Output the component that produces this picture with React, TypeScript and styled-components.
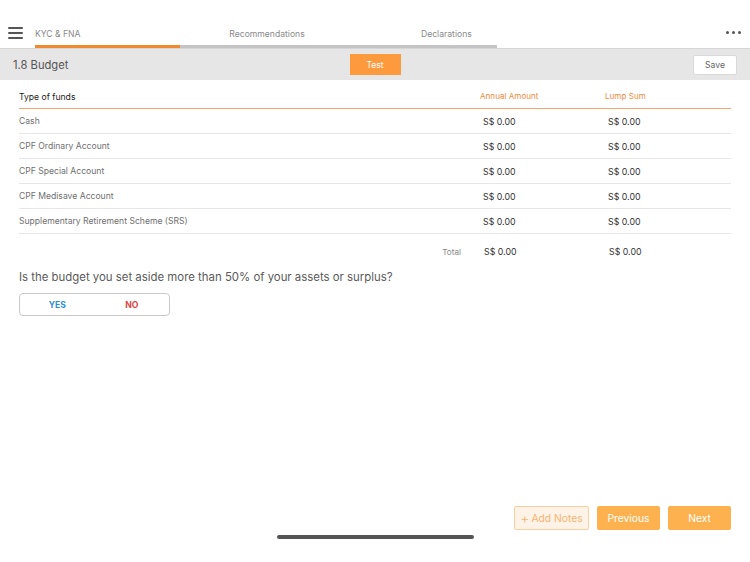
import React, { useState } from 'react'
import styled, { createGlobalStyle } from 'styled-components'

const GlobalStyle = createGlobalStyle`
	html, body {
		margin: 0;
		padding: 0;
		background: #ffffff;
	}
	body {
		font-family: Inter, 'Liberation Sans', Arial, sans-serif;
		-webkit-font-smoothing: antialiased;
	}
`

const Page = styled.div`
	width: 750px;
	height: 562px;
	display: flex;
	flex-direction: column;
	overflow: hidden;
	background: #fff;
`

const TopBar = styled.div`
	height: 48px;
	display: flex;
	align-items: flex-end;
	border-bottom: 1px solid #d6d6d6;
	padding-left: 8px;
	padding-right: 8px;
`

const Hamburger = styled.div`
	width: 15px;
	display: flex;
	flex-direction: column;
	gap: 3px;
	margin-bottom: 9px;
	margin-right: 12px;

	span {
		display: block;
		height: 2px;
		border-radius: 1px;
		background: #555;
	}
`

const Tabs = styled.div`
	display: flex;
	flex: 1;
`

const Tab = styled.div<{ $width: number; $active?: boolean; $indent?: number; $center?: boolean }>`
	width: ${p => p.$width}px;
	font-size: 8.6px;
	color: #8a8a8a;
	text-align: ${p => (p.$center ? 'center' : 'left')};
	padding-left: ${p => p.$indent || 0}px;
	box-sizing: border-box;
	height: 20px;
	border-bottom: 3px solid ${p => (p.$active ? '#f08a2c' : '#c4c4c4')};
	line-height: 12px;
`

const Dots = styled.div`
	margin-left: auto;
	display: flex;
	gap: 3px;
	margin-bottom: 14px;
	margin-right: 1px;

	span {
		width: 3px;
		height: 3px;
		border-radius: 50%;
		background: #555;
	}
`

const SubHeader = styled.div`
	height: 31px;
	background: #e6e6e6;
	display: grid;
	grid-template-columns: 1fr auto 1fr;
	align-items: center;
	padding: 0 13px;
`

const Title = styled.div`
	font-size: 11.2px;
	color: #555;
`

const TestButton = styled.div`
	width: 51px;
	height: 21px;
	background: #fd9a3e;
	color: #fff;
	font-size: 8.6px;
	display: flex;
	align-items: center;
	justify-content: center;
`

const SaveButton = styled.div`
	justify-self: end;
	width: 42px;
	height: 18px;
	background: #fff;
	border: 1px solid #d9d9d9;
	border-radius: 2px;
	color: #666;
	font-size: 8.6px;
	display: flex;
	align-items: center;
	justify-content: center;
`

const Content = styled.div`
	padding: 0 19px;
	flex: 1;
`

const Row = styled.div<{ $height: number; $line?: 'orange' | 'gray' | 'none' }>`
	display: grid;
	grid-template-columns: 1fr 125px 126px;
	align-items: center;
	height: ${p => p.$height}px;
	border-bottom: 1px solid
		${p => (p.$line === 'orange' ? '#f2a56c' : p.$line === 'none' ? 'transparent' : '#e6e6e6')};
	box-sizing: border-box;
`

const Label = styled.div<{ $dark?: boolean }>`
	font-size: 8.6px;
	color: ${p => (p.$dark ? '#222' : '#6f6f6f')};
`

const ColHead = styled.div`
	font-size: 8.1px;
	color: #f08a3a;
	align-self: start;
	padding-top: 11px;
`

const Amount = styled.div`
	font-size: 8.8px;
	color: #333;
	padding-left: 3px;
`

const TotalLabel = styled.div`
	font-size: 8.2px;
	color: #8a8a8a;
	text-align: right;
	padding-right: 19px;
`

const Question = styled.div`
	font-size: 11.4px;
	line-height: 14px;
	color: #5a5a5a;
`

const Segmented = styled.div`
	width: 149px;
	height: 21px;
	margin-top: 9px;
	border: 1px solid #c9c9c9;
	border-radius: 4px;
	display: grid;
	grid-template-columns: 1fr 1fr;
	align-items: center;
`

const Choice = styled.div<{ $tone: 'yes' | 'no'; $selected?: boolean }>`
	text-align: center;
	font-size: 8.6px;
	font-weight: 700;
	color: ${p => (p.$tone === 'yes' ? '#2f8fd6' : '#e0463e')};
	cursor: pointer;
	opacity: ${p => (p.$selected === false ? 0.5 : 1)};
`

const Footer = styled.div`
	display: flex;
	justify-content: flex-end;
	gap: 8px;
	padding: 0 19px 0 0;
`

const FooterButton = styled.div<{ $ghost?: boolean; $width: number }>`
	width: ${p => p.$width}px;
	height: 24px;
	box-sizing: border-box;
	border-radius: 2px;
	font-size: 10.3px;
	display: flex;
	align-items: center;
	justify-content: center;
	gap: 2px;
	background: ${p => (p.$ghost ? '#fff3e8' : '#fdb24f')};
	color: ${p => (p.$ghost ? '#f7b370' : '#fff')};
	border: 1px solid ${p => (p.$ghost ? '#fbcf9f' : '#fdb24f')};
`

const HomeBar = styled.div`
	width: 197px;
	height: 4px;
	border-radius: 2px;
	background: #555;
	margin: 5px auto 0;
	position: relative;
	left: 0.5px;
	margin-bottom: 23px;
`

const funds = [
	'Cash',
	'CPF Ordinary Account',
	'CPF Special Account',
	'CPF Medisave Account',
	'Supplementary Retirement Scheme (SRS)',
]

const App: React.FC = () => {
	const [answer, setAnswer] = useState<'yes' | 'no' | null>(null)

	return (
		<Page>
			<GlobalStyle />
			<TopBar>
				<Hamburger>
					<span />
					<span />
					<span />
				</Hamburger>
				<Tabs>
					<Tab $width={145} $active>
						KYC &amp; FNA
					</Tab>
					<Tab $width={174} $center>
						Recommendations
					</Tab>
					<Tab $width={143} $indent={67}>
						Declarations
					</Tab>
				</Tabs>
				<Dots>
					<span />
					<span />
					<span />
				</Dots>
			</TopBar>

			<SubHeader>
				<Title>1.8 Budget</Title>
				<TestButton>Test</TestButton>
				<SaveButton>Save</SaveButton>
			</SubHeader>

			<Content>
				<Row $height={29} $line="orange">
					<Label $dark style={{ paddingTop: 5 }}>Type of funds</Label>
					<ColHead>Annual Amount</ColHead>
					<ColHead>Lump Sum</ColHead>
				</Row>
				{funds.map(name => (
					<Row $height={25} key={name}>
						<Label>{name}</Label>
						<Amount>S$ 0.00</Amount>
						<Amount>S$ 0.00</Amount>
					</Row>
				))}
				<Row $height={36} $line="none">
					<TotalLabel>Total</TotalLabel>
					<Amount style={{ paddingLeft: 4 }}>S$ 0.00</Amount>
					<Amount style={{ paddingLeft: 4 }}>S$ 0.00</Amount>
				</Row>
				<Question>Is the budget you set aside more than 50% of your assets or surplus?</Question>
				<Segmented>
					<Choice $tone="yes" onClick={() => setAnswer('yes')}>
						YES
					</Choice>
					<Choice $tone="no" onClick={() => setAnswer('no')}>
						NO
					</Choice>
				</Segmented>
				{answer && <input type="hidden" value={answer} readOnly />}
			</Content>

			<Footer>
				<FooterButton $ghost $width={75}>
					<span style={{ fontSize: 14, lineHeight: '10px', fontWeight: 300 }}>+</span>
					Add Notes
				</FooterButton>
				<FooterButton $width={63}>Previous</FooterButton>
				<FooterButton $width={63}>Next</FooterButton>
			</Footer>
			<HomeBar />
		</Page>
	)
}

export default App
